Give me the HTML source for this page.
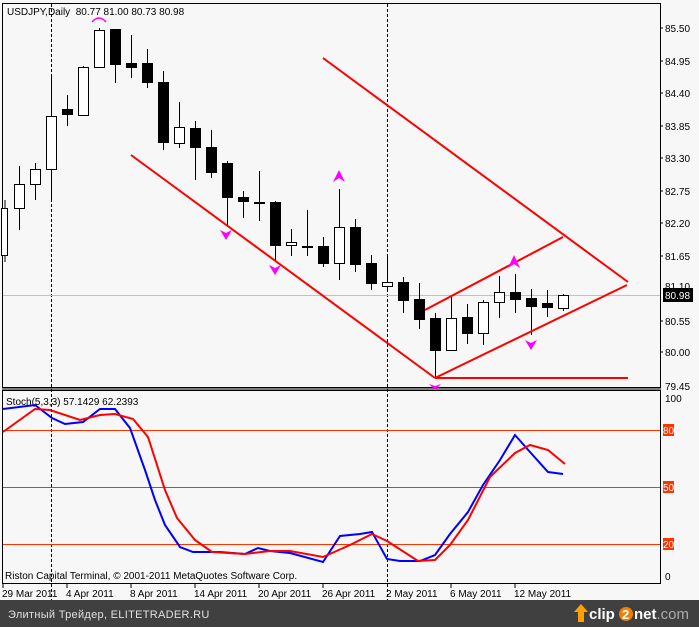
<!DOCTYPE html>
<html><head><meta charset="utf-8"><style>
html,body{margin:0;padding:0;width:699px;height:627px;overflow:hidden;background:#f7f7f7}
svg{display:block}
text{font-family:"Liberation Sans",sans-serif;font-size:10px;fill:#000}
</style></head><body>
<svg width="699" height="627" xmlns="http://www.w3.org/2000/svg">
<rect x="0" y="0" width="699" height="627" fill="#f7f7f7"/>
<rect x="2.5" y="3.5" width="658" height="384" fill="none" stroke="#000"/>
<rect x="2.5" y="390.5" width="658" height="193" fill="none" stroke="#000"/>
<line x1="2" y1="389" x2="661" y2="389" stroke="#000"/>
<line x1="51.5" y1="4" x2="51.5" y2="600" stroke="#000" stroke-dasharray="3,2"/>
<line x1="387.5" y1="4" x2="387.5" y2="600" stroke="#000" stroke-dasharray="3,2"/>
<line x1="3" y1="295.5" x2="660" y2="295.5" stroke="#c0c0c0"/>
<g>
<text x="665" y="32">85.50</text><text x="665" y="65">84.95</text><text x="665" y="97">84.40</text>
<text x="665" y="130">83.85</text><text x="665" y="162">83.30</text><text x="665" y="195">82.75</text>
<text x="665" y="227">82.20</text><text x="665" y="260">81.65</text><text x="665" y="290">81.10</text>
<text x="665" y="325">80.55</text><text x="665" y="356">80.00</text><text x="665" y="390">79.45</text>
</g>
<g stroke="#000"><line x1="660" y1="28" x2="663" y2="28"/><line x1="660" y1="61" x2="663" y2="61"/><line x1="660" y1="93" x2="663" y2="93"/><line x1="660" y1="126" x2="663" y2="126"/><line x1="660" y1="158" x2="663" y2="158"/><line x1="660" y1="191" x2="663" y2="191"/><line x1="660" y1="223" x2="663" y2="223"/><line x1="660" y1="256" x2="663" y2="256"/><line x1="660" y1="321" x2="663" y2="321"/><line x1="660" y1="352" x2="663" y2="352"/></g>
<rect x="663" y="288" width="30" height="14" fill="#000"/>
<text x="665" y="299" style="fill:#fff">80.98</text>
<text x="7" y="15" xml:space="preserve">USDJPY,Daily  80.77 81.00 80.73 80.98</text>
<g stroke="#000" stroke-width="1">
<line x1="5" y1="200" x2="5" y2="262"/><rect x="1.5" y="208.5" width="6" height="47" fill="#fff"/>
<line x1="19.5" y1="166" x2="19.5" y2="230"/><rect x="14.5" y="184.5" width="10" height="24" fill="#fff"/>
<line x1="35.5" y1="163" x2="35.5" y2="200"/><rect x="30.5" y="169.5" width="10" height="15" fill="#fff"/>
<line x1="51.5" y1="75" x2="51.5" y2="200"/><rect x="46.5" y="116.5" width="10" height="53" fill="#fff"/>
<line x1="67.5" y1="95" x2="67.5" y2="126"/><rect x="62.5" y="109.5" width="10" height="5" fill="#000"/>
<line x1="83.5" y1="66" x2="83.5" y2="116"/><rect x="78.5" y="67.5" width="10" height="48" fill="#fff"/>
<line x1="99.5" y1="28" x2="99.5" y2="68"/><rect x="94.5" y="30.5" width="10" height="37" fill="#fff"/>
<line x1="115.5" y1="29" x2="115.5" y2="83"/><rect x="110.5" y="29.5" width="10" height="35" fill="#000"/>
<line x1="131.5" y1="35" x2="131.5" y2="78"/><rect x="126.5" y="63.5" width="10" height="4" fill="#000"/>
<line x1="147.5" y1="49" x2="147.5" y2="88"/><rect x="142.5" y="63.5" width="10" height="19" fill="#000"/>
<line x1="163.5" y1="71" x2="163.5" y2="150"/><rect x="158.5" y="82.5" width="10" height="60" fill="#000"/>
<line x1="179.5" y1="102" x2="179.5" y2="148"/><rect x="174.5" y="127.5" width="10" height="16" fill="#fff"/>
<line x1="195.5" y1="121" x2="195.5" y2="180"/><rect x="190.5" y="128.5" width="10" height="19" fill="#000"/>
<line x1="211.5" y1="130" x2="211.5" y2="178"/><rect x="206.5" y="147.5" width="10" height="25" fill="#000"/>
<line x1="227.5" y1="161" x2="227.5" y2="225"/><rect x="222.5" y="163.5" width="10" height="34" fill="#000"/>
<line x1="243.5" y1="191" x2="243.5" y2="218"/><rect x="238.5" y="197.5" width="10" height="4" fill="#000"/>
<line x1="259.5" y1="171" x2="259.5" y2="221"/><rect x="254.5" y="202.5" width="10" height="1" fill="#000"/>
<line x1="275.5" y1="201" x2="275.5" y2="260"/><rect x="270.5" y="202.5" width="10" height="43" fill="#000"/>
<line x1="291.5" y1="229" x2="291.5" y2="256"/><rect x="286.5" y="242.5" width="10" height="3" fill="#fff"/>
<line x1="307.5" y1="210" x2="307.5" y2="256"/><rect x="302.5" y="246.5" width="10" height="1" fill="#000"/>
<line x1="323.5" y1="237" x2="323.5" y2="267"/><rect x="318.5" y="246.5" width="10" height="17" fill="#000"/>
<line x1="339.5" y1="189" x2="339.5" y2="280"/><rect x="334.5" y="227.5" width="10" height="36" fill="#fff"/>
<line x1="355.5" y1="219" x2="355.5" y2="272"/><rect x="350.5" y="227.5" width="10" height="37" fill="#000"/>
<line x1="371.5" y1="255" x2="371.5" y2="290"/><rect x="366.5" y="263.5" width="10" height="20" fill="#000"/>
<line x1="387.5" y1="254" x2="387.5" y2="290"/><rect x="382.5" y="282.5" width="10" height="4" fill="#fff"/>
<line x1="403.5" y1="277" x2="403.5" y2="313"/><rect x="398.5" y="282.5" width="10" height="18" fill="#000"/>
<line x1="419.5" y1="283" x2="419.5" y2="329"/><rect x="414.5" y="299.5" width="10" height="20" fill="#000"/>
<line x1="435.5" y1="313" x2="435.5" y2="378"/><rect x="430.5" y="318.5" width="10" height="32" fill="#000"/>
<line x1="451.5" y1="297" x2="451.5" y2="350"/><rect x="446.5" y="318.5" width="10" height="32" fill="#fff"/>
<line x1="467.5" y1="304" x2="467.5" y2="344"/><rect x="462.5" y="317.5" width="10" height="16" fill="#000"/>
<line x1="483.5" y1="300" x2="483.5" y2="345"/><rect x="478.5" y="302.5" width="10" height="31" fill="#fff"/>
<line x1="499.5" y1="276" x2="499.5" y2="318"/><rect x="494.5" y="292.5" width="10" height="10" fill="#fff"/>
<line x1="515.5" y1="274" x2="515.5" y2="313"/><rect x="510.5" y="292.5" width="10" height="7" fill="#000"/>
<line x1="531.5" y1="289" x2="531.5" y2="335"/><rect x="526.5" y="298.5" width="10" height="8" fill="#000"/>
<line x1="547.5" y1="290" x2="547.5" y2="317"/><rect x="542.5" y="303.5" width="10" height="4" fill="#000"/>
<line x1="563.5" y1="294" x2="563.5" y2="311"/><rect x="558.5" y="295.5" width="10" height="13" fill="#fff"/>
</g>
<g stroke="#ff0000" stroke-width="2" fill="none">
<line x1="131" y1="155" x2="435" y2="378"/>
<line x1="323" y1="58" x2="628" y2="282"/>
<line x1="435" y1="378" x2="627" y2="285"/>
<line x1="425" y1="310" x2="563" y2="237"/>
<line x1="435" y1="378" x2="628" y2="378"/>
</g>
<g fill="#ff00ff">
<path d="M92,22 Q99,14 106,22" stroke="#ff00ff" fill="none" stroke-width="1.5"/>
<path d="M339,170 L333,182 L339,178 L345,182 Z"/>
<path d="M514,255 L508,268 L514,264 L520,268 Z"/>
<path d="M226,240 L220,230 L226,233 L232,230 Z"/>
<path d="M275,275 L269,265 L275,268 L281,265 Z"/>
<path d="M531,350 L525,340 L531,343 L537,340 Z"/>
<path d="M435,390 L429,384 L435,386 L441,384 Z"/>
</g>
<text x="6" y="405">Stoch(5,3,3) 57.1429 62.2393</text>
<g stroke="#ff3300" stroke-width="1">
<line x1="3" y1="430.5" x2="660" y2="430.5"/>
<line x1="3" y1="487.5" x2="660" y2="487.5"/>
<line x1="3" y1="544.5" x2="660" y2="544.5"/>
</g>
<rect x="663" y="424" width="11" height="12" fill="#ff3300"/><text x="663" y="434" style="fill:#fff">80</text>
<rect x="663" y="481" width="11" height="12" fill="#ff3300"/><text x="663" y="491" style="fill:#fff">50</text>
<rect x="663" y="538" width="11" height="12" fill="#ff3300"/><text x="663" y="548" style="fill:#fff">20</text>
<text x="665" y="402">100</text><text x="665" y="580">0</text>
<polyline fill="none" stroke="#0000ff" stroke-width="2" points="3,409 35,405 52,418 65,424 83,422 100,409 115,409 130,428 145,470 155,500 165,525 180,547 193,552 220,552 245,554 258,548 270,551 290,553 323,562 340,536 360,534 372,532 387,559 400,561 420,561 435,555 450,534 468,512 483,485 500,460 515,435 530,452 548,472 563,474"/>
<polyline fill="none" stroke="#ff0000" stroke-width="2" points="3,432 35,409 50,410 80,420 100,415 115,414 133,419 148,437 165,490 177,518 195,540 212,552 245,554 270,551 290,551 323,557 350,545 372,534 387,541 418,561 435,560 450,545 468,520 490,477 515,453 530,445 548,450 565,464"/>
<text x="5" y="579">Riston Capital Terminal, © 2001-2011 MetaQuotes Software Corp.</text>
<g stroke="#000"><line x1="3" y1="584" x2="3" y2="588"/><line x1="67" y1="584" x2="67" y2="588"/><line x1="131" y1="584" x2="131" y2="588"/><line x1="195" y1="584" x2="195" y2="588"/><line x1="259" y1="584" x2="259" y2="588"/><line x1="323" y1="584" x2="323" y2="588"/><line x1="451" y1="584" x2="451" y2="588"/><line x1="515" y1="584" x2="515" y2="588"/></g>
<text x="2" y="597">29 Mar 2011</text><text x="66" y="597">4 Apr 2011</text><text x="130" y="597">8 Apr 2011</text>
<text x="194" y="597">14 Apr 2011</text><text x="258" y="597">20 Apr 2011</text><text x="322" y="597">26 Apr 2011</text>
<text x="386" y="597">2 May 2011</text><text x="450" y="597">6 May 2011</text><text x="514" y="597">12 May 2011</text>
<rect x="0" y="600" width="699" height="27" fill="#404040"/>
<text x="8" y="618" style="fill:#e0e0e0;font-size:11px;letter-spacing:0.3px">Элитный Трейдер, ELITETRADER.RU</text>
<path d="M578,622 L578,612 L574,612 L581,604 L588,612 L584,612 L584,622 Z" fill="#ffa000"/>
<text x="589" y="619" style="fill:#fff;font-size:15px;font-weight:bold">clip</text>
<circle cx="626" cy="614" r="7" fill="#f08000"/>
<text x="622" y="619" style="fill:#fff;font-size:13px;font-weight:bold">2</text>
<text x="634" y="619" style="fill:#fff;font-size:15px;font-weight:bold">net<tspan style="fill:#aaa;font-weight:normal">.com</tspan></text>
</svg>
</body></html>
